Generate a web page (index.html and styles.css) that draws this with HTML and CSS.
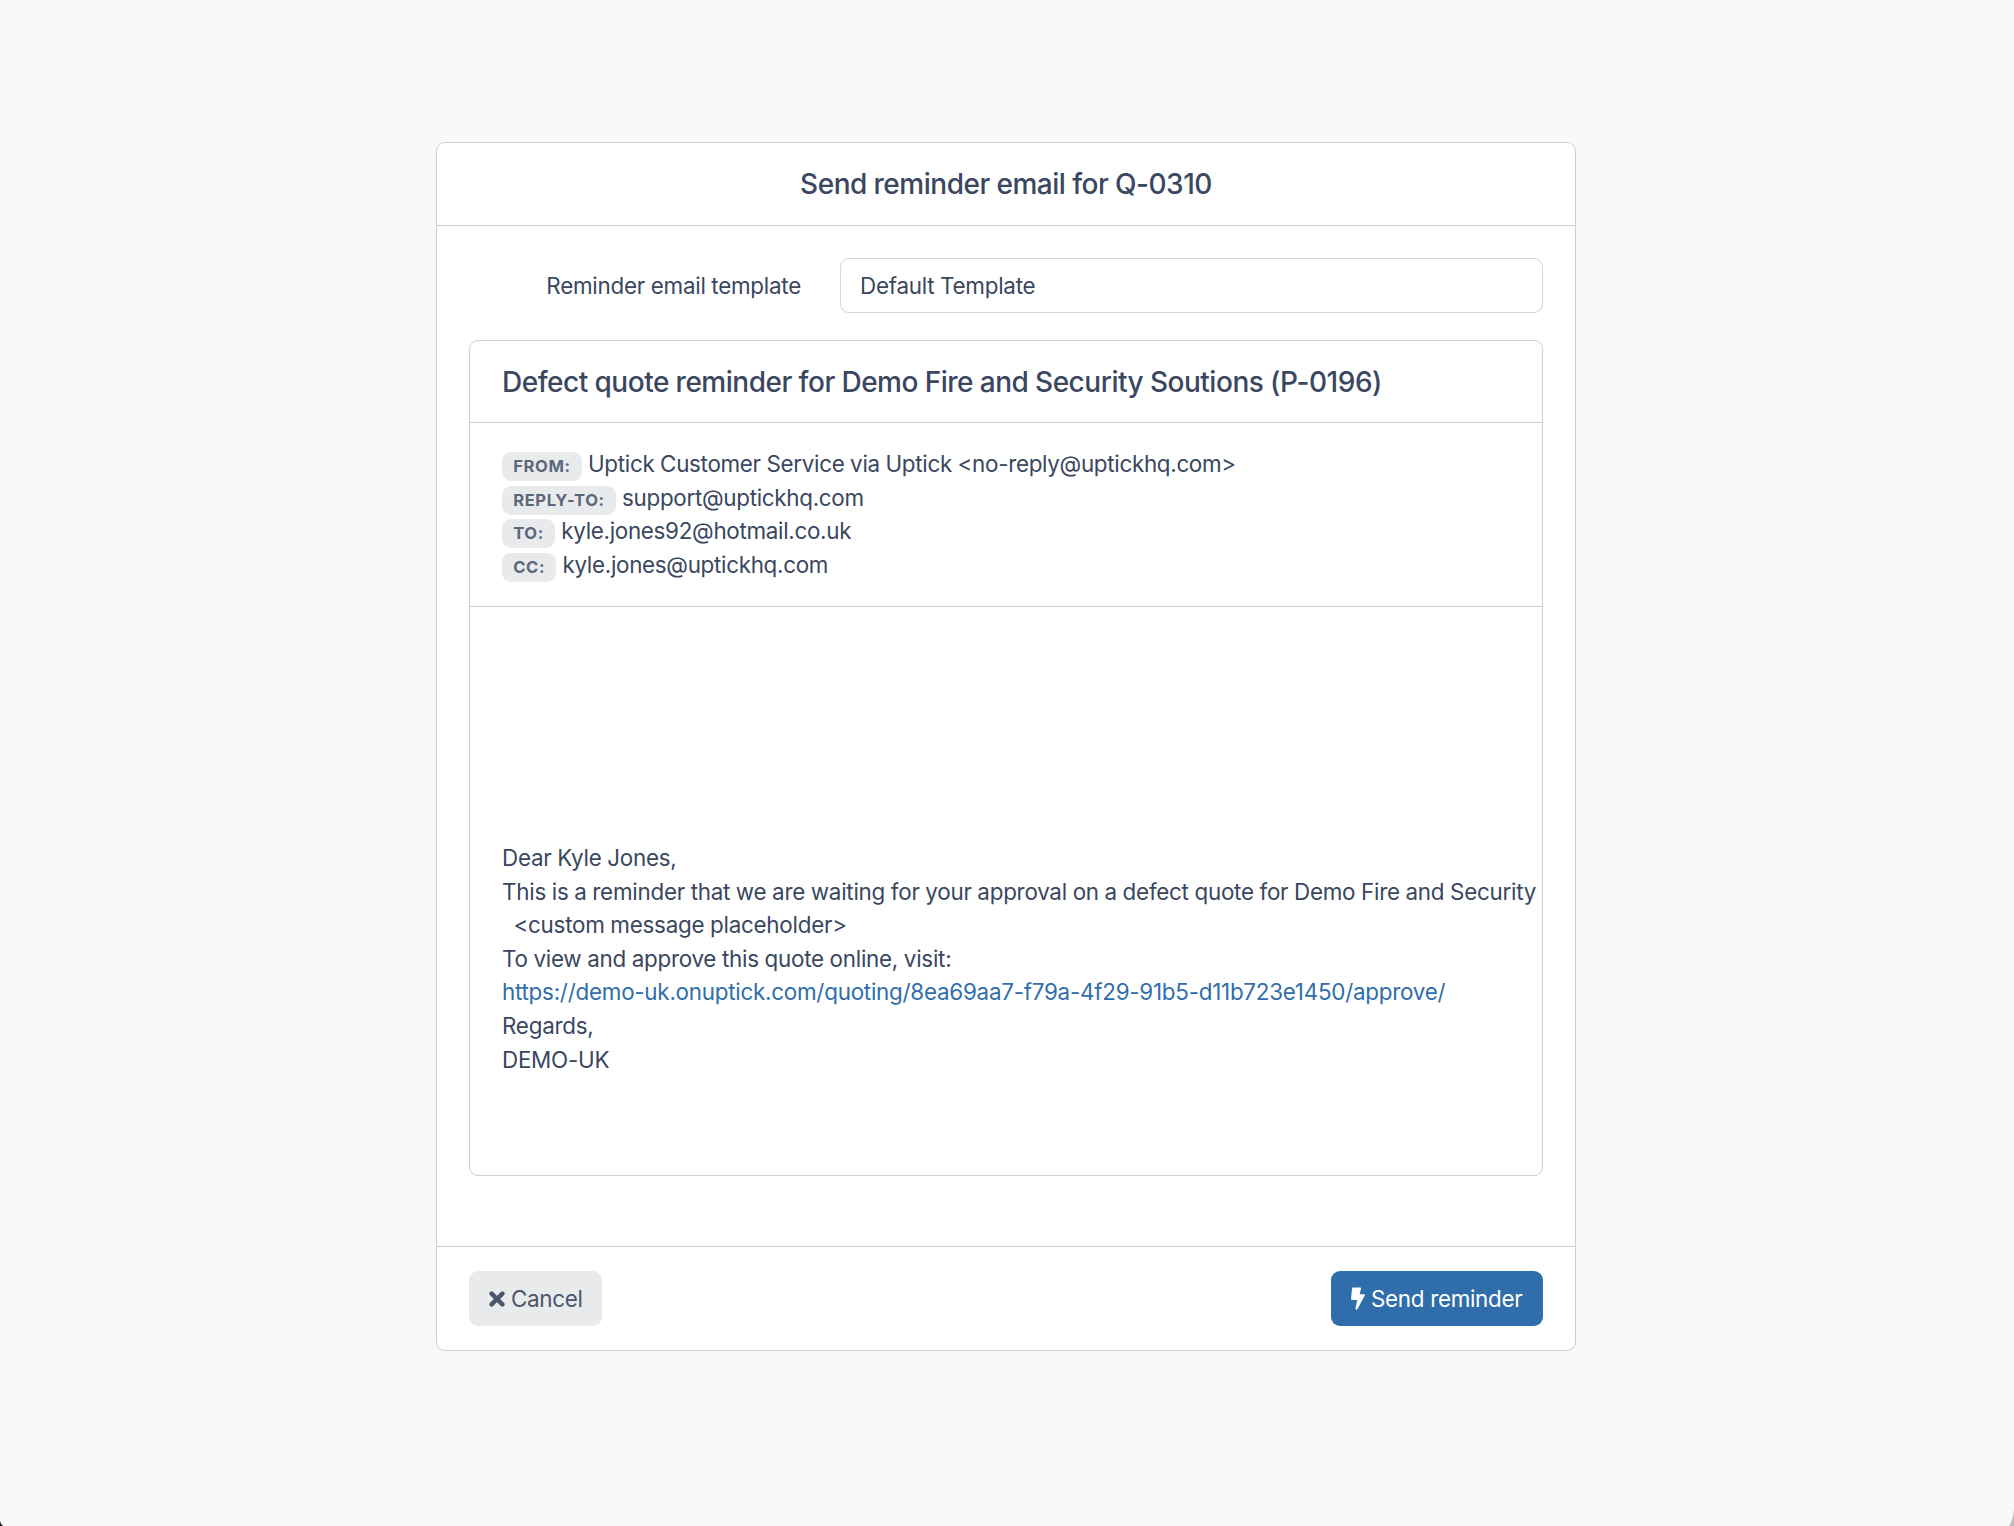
FILE: index.html
```html
<!DOCTYPE html>
<html lang="en">
<head>
<meta charset="utf-8">
<title>Send reminder email for Q-0310</title>
<link rel="stylesheet" href="styles.css">
</head>
<body>
<main class="dialog">
  <header class="dialog-header"><h1 class="title">Send reminder email for Q-0310</h1></header>
  <section class="dialog-body">
    <div class="field">
      <label class="field-label">Reminder email template</label>
      <div class="field-control">Default Template</div>
    </div>
    <article class="email">
      <h2 class="title email-subject">Defect quote reminder for Demo Fire and Security Soutions (P-0196)</h2>
      <div class="email-meta">
        <div class="meta-row"><span class="tag">FROM:</span> Uptick Customer Service via Uptick &lt;no-reply@uptickhq.com&gt;</div>
        <div class="meta-row"><span class="tag">REPLY-TO:</span> support@uptickhq.com</div>
        <div class="meta-row"><span class="tag">TO:</span> kyle.jones92@hotmail.co.uk</div>
        <div class="meta-row"><span class="tag">CC:</span> kyle.jones@uptickhq.com</div>
      </div>
      <div class="email-content">
        <p>Dear Kyle Jones,</p>
        <p>This is a reminder that we are waiting for your approval on a defect quote for Demo Fire and Security</p>
        <p>&nbsp;&nbsp;&lt;custom message placeholder&gt;</p>
        <p>To view and approve this quote online, visit:</p>
        <p><a class="link" href="#">https://demo-uk.onuptick.com/quoting/8ea69aa7-f79a-4f29-91b5-d11b723e1450/approve/</a></p>
        <p>Regards,</p>
        <p>DEMO-UK</p>
      </div>
    </article>
  </section>
  <footer class="dialog-footer">
    <button class="button button-cancel"><svg class="icon-times" viewBox="0 0 16 16"><path d="M2.6 2.6 13.4 13.4M13.4 2.6 2.6 13.4"/></svg>Cancel</button>
    <button class="button button-primary"><svg class="icon-bolt" viewBox="0 0 14 23"><path d="M2 .4H9.2Q10.3.5 10.1 1.5L8.6 7.2H13Q14.2 7.5 13.7 8.6L6.4 22.2Q5.9 22.9 5 22.6 4.3 22.2 4.5 21.4L6.2 13H1Q0 12.800 0 11.800L1.100 1.300Q1.200.500 2 .400Z"/></svg>Send reminder</button>
  </footer>
</main>
<svg class="corner corner-left" viewBox="0 0 3 5"><path d="M0 0Q.5 3.500 3 5H0Z"/></svg>
<svg class="corner corner-right" viewBox="0 0 5 16"><path d="M5 0Q4 10 0 16H5Z"/></svg>
</body>
</html>
```
FILE: styles.css
```css
* { box-sizing: border-box; }
body {
  margin: 0;
  position: relative;
  height: 1526px;
  padding-top: 142px;
  padding-left: 436px;
  background: #f9f9f9;
  color: #3a475f;
  font: 400 22.4px/33.6px Inter, sans-serif;
  letter-spacing: -0.011em;
  word-spacing: -0.3px;
}
.dialog {
  display: flex;
  flex-direction: column;
  width: 1140px;
  height: 1209px;
  background: #fff;
  border: 1px solid #cfd0d4;
  border-radius: 9px;
}
.dialog-header {
  display: flex;
  align-items: center;
  justify-content: center;
  height: 83px;
  border-bottom: 1px solid #cfd0d4;
}
.title { margin: 0; font-size: 28px; font-weight: 500; line-height: 34px; letter-spacing: -0.017em; }
.dialog-body { flex: 1; padding: 32px; }
.field { display: flex; align-items: center; margin-bottom: 27px; }
.field-label { width: 371px; padding-right: 39px; text-align: right; }
.field-control {
  flex: 1;
  height: 55px;
  padding: 10px 19px;
  border: 1px solid #d3d4dc;
  border-radius: 9px;
}
.email { height: 836px; border: 1px solid #cfd0d4; border-radius: 9px; overflow: hidden; }
.email-subject { height: 82px; padding: 24px 32px; border-bottom: 1px solid #cfd0d4; }
.email-meta { height: 184px; padding: 24px 32px; border-bottom: 1px solid #cfd0d4; letter-spacing: -0.3px; }
.meta-row { height: 33.6px; }
.tag {
  display: inline-block;
  padding: 0 11.2px;
  margin-right: 0.5px;
  border-radius: 9px;
  background: #e8eaeb;
  color: #5c677b;
  font-size: 16.6px;
  font-weight: 650;
  line-height: 29px;
  letter-spacing: 0.6px;
}
.email-content { padding: 234px 0 0 32px; white-space: nowrap; }
.email-content p { margin: 0; }
.link { color: #306eab; text-decoration: none; }
.dialog-footer {
  display: flex;
  align-items: center;
  justify-content: space-between;
  height: 104px;
  padding: 0 32px;
  border-top: 1px solid #cfd0d4;
}
.button {
  display: flex;
  align-items: center;
  gap: 6px;
  height: 55px;
  padding: 0 20px;
  border: 0;
  border-radius: 9px;
  background: #e8eaeb;
  color: #4a566c;
  font: inherit;
  letter-spacing: -0.3px;
  white-space: nowrap;
}
.button-cancel { width: 133px; }
.button-primary { width: 212px; background: #306eab; color: #fff; }
.icon-times { flex: none; width: 16px; height: 16px; fill: none; stroke: currentColor; stroke-width: 4.4; stroke-linecap: round; }
.icon-bolt { flex: none; width: 14px; height: 23px; fill: currentColor; }
.corner { position: absolute; bottom: 0; }
.corner-left { left: 0; width: 3px; height: 5px; fill: #111; }
.corner-right { right: 0; width: 5px; height: 16px; fill: #bdbdbd; }
```
